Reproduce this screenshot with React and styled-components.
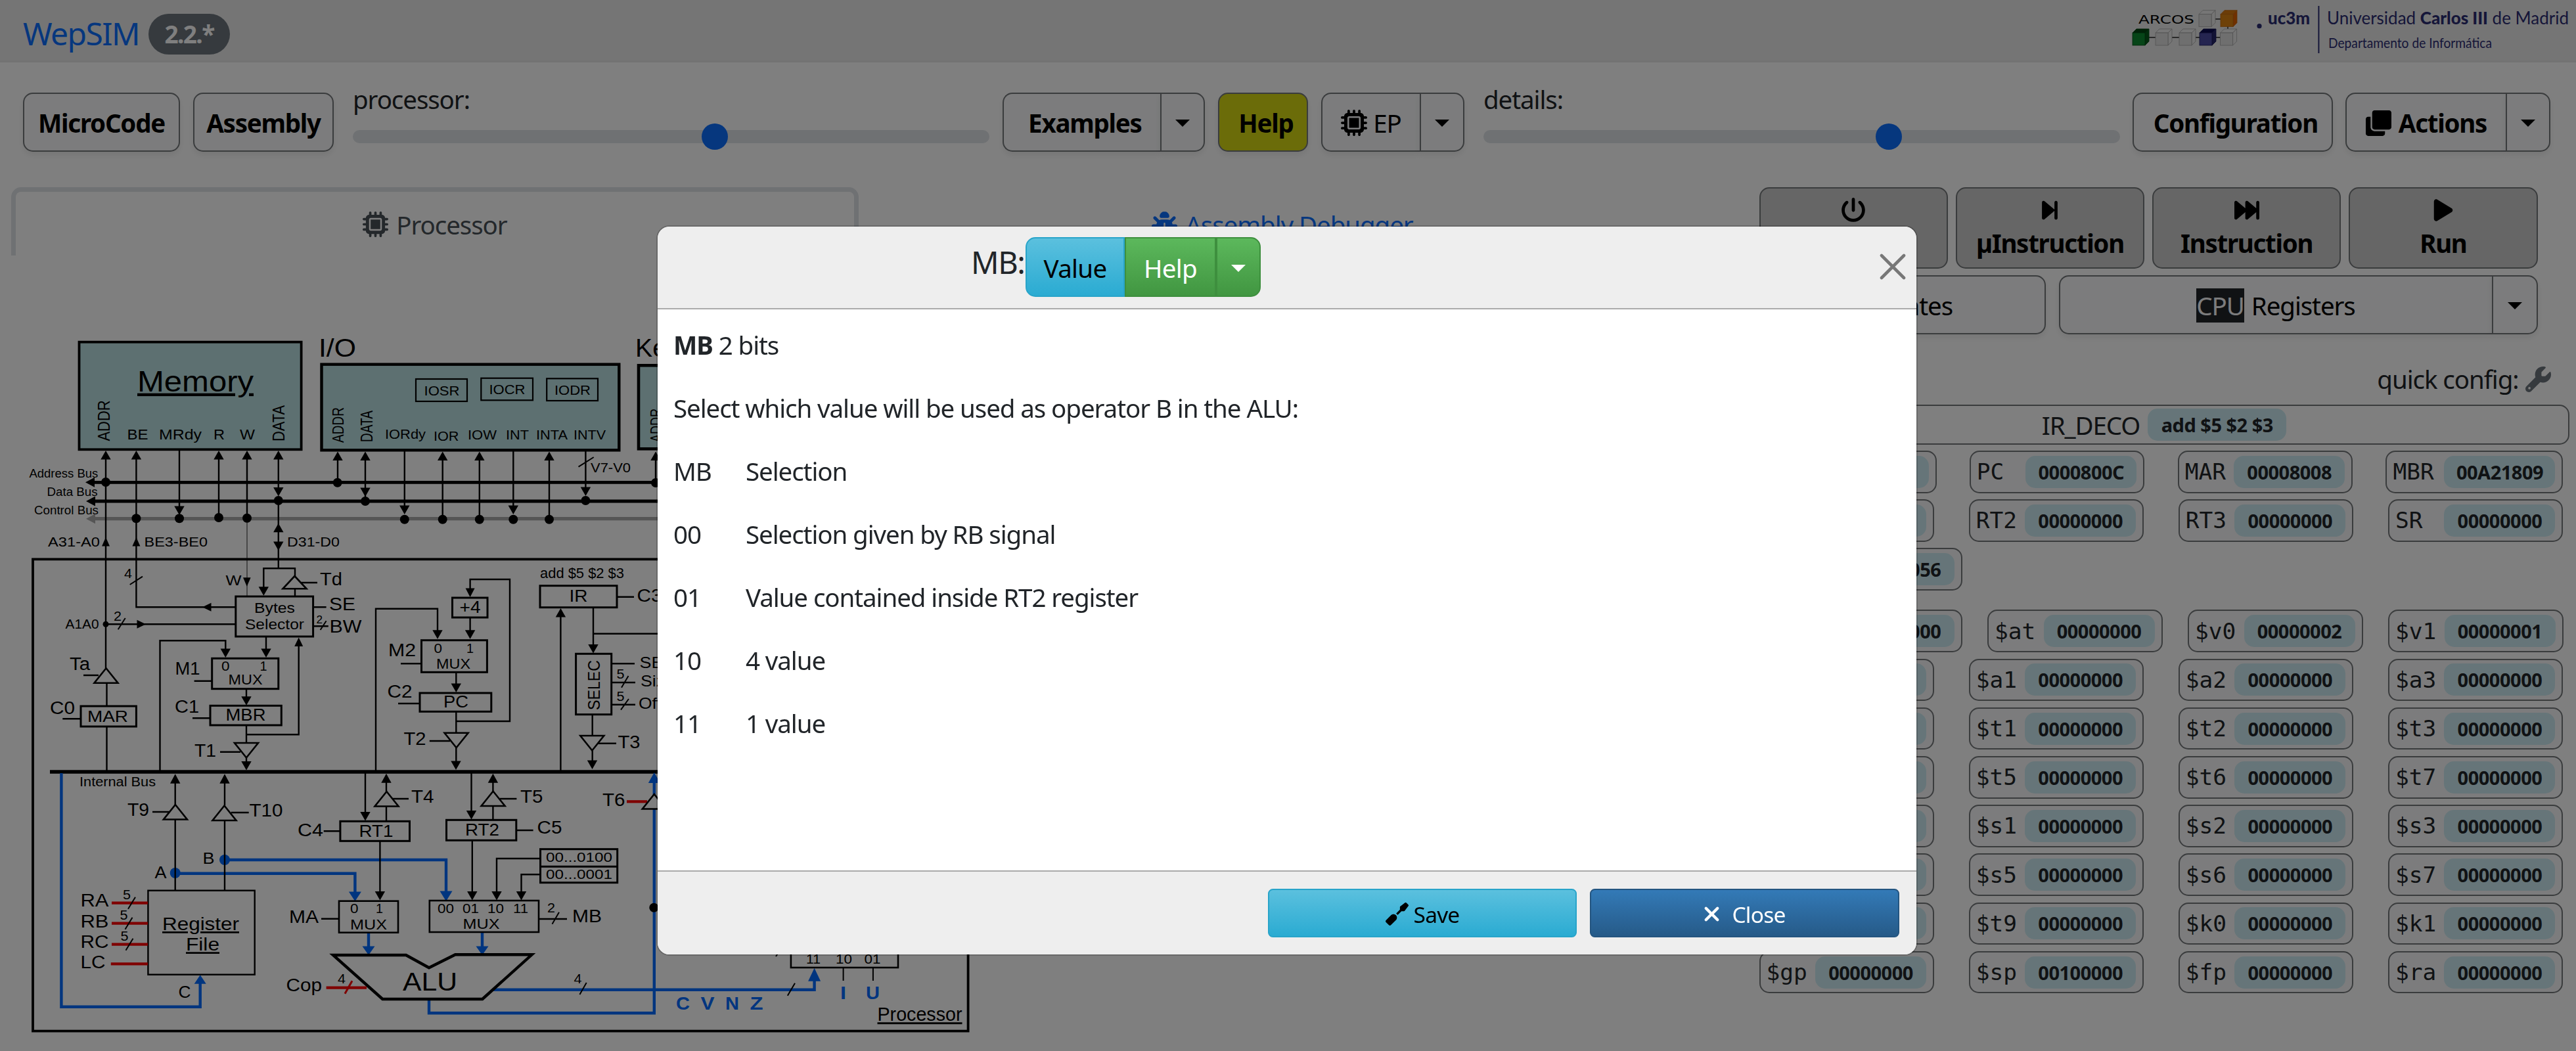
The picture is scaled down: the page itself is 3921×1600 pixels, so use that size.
import React from "react";
import styled, { createGlobalStyle, css } from "styled-components";
import {
  FaMicrochip,
  FaBug,
  FaPowerOff,
  FaForwardStep,
  FaForwardFast,
  FaPlay,
  FaWrench,
  FaScrewdriver,
  FaXmark,
} from "react-icons/fa6";
import { FaClone } from "react-icons/fa";

const Global = createGlobalStyle`
  * { box-sizing: border-box; }
  html, body { margin: 0; padding: 0; background: #fff; overflow: hidden; }
  body {
    font-family: "Noto Sans", "Open Sans", sans-serif;
    font-size: 38.5px;
    line-height: 60px;
    letter-spacing: -1.08px;
    color: #212529;
    width: 3921px;
    height: 1600px;
  }
  svg { display: block; flex: none; }
`;

const Page = styled.div`
  display: flex;
  flex-direction: column;
  width: 3921px;
  height: 1600px;
`;

/* ---------- header ---------- */

const Header = styled.header`
  display: flex;
  justify-content: space-between;
  height: 95px;
  padding-left: 35px;
  background: #ebebeb;
  border-bottom: 3px solid #e6e6e6;
`;

const Brand = styled.div`
  display: flex;
  align-items: flex-start;
  padding-top: 21px;
`;

const BrandName = styled.a`
  width: 191px;
  color: #0d6efd;
  font-size: 48px;
  line-height: 60px;
  letter-spacing: -1.6px;
`;

const Version = styled.span`
  width: 124px;
  height: 62px;
  padding-top: 1px;
  border-radius: 31px;
  background: #6c757d;
  color: #fff;
  font-size: 37px;
  font-weight: 700;
  line-height: 60px;
  letter-spacing: -1.6px;
  text-align: center;
`;

/* ---------- buttons ---------- */

const Toolbar = styled.div`
  display: flex;
  height: 190px;
  padding: 26px 0 0 35px;
`;

const Button = styled.button`
  display: flex;
  align-items: center;
  justify-content: center;
  gap: ${(p) => p.$gap ?? 11}px;
  width: ${(p) => p.$w}px;
  height: 90px;
  padding: 2px 0 0;
  margin: ${(p) => (p.$bar ? "20px 0 0" : "0")};
  border: 2px solid #75787b;
  border-radius: 15px;
  background: ${(p) => p.$bg ?? "#f8f9fa"};
  box-shadow: 0 5px 10px rgba(0, 0, 0, 0.075);
  color: #000;
  font: inherit;
  font-weight: ${(p) => (p.$bold ? 700 : 400)};
  letter-spacing: ${(p) => (p.$bold ? "-1.25px" : "inherit")};
`;

const Split = styled.div`
  display: flex;
  width: ${(p) => p.$w}px;
  margin: ${(p) => (p.$bar ? "20px 0 0" : "0")};
  & > ${Button} { margin-top: 0; }
  & > ${Button}:first-child {
    flex: 1;
    border-top-right-radius: 0;
    border-bottom-right-radius: 0;
    border-right: 0;
  }
  & > ${Button}:last-child {
    border-top-left-radius: 0;
    border-bottom-left-radius: 0;
  }
`;

const Caret = styled.i`
  width: 0;
  height: 0;
  border: 11px solid transparent;
  border-top-color: ${(p) => p.$color ?? "#000"};
  border-bottom: 0;
`;

const Gap = styled.div`
  flex: none;
  width: ${(p) => p.$w}px;
`;

/* ---------- sliders ---------- */

const SliderBox = styled.label`
  display: flex;
  flex-direction: column;
  gap: 7px;
  width: 969px;
`;

const Range = styled.input`
  appearance: none;
  width: 100%;
  height: 40px;
  margin: 0;
  background: transparent;
  &::-webkit-slider-runnable-track {
    height: 20px;
    border-radius: 10px;
    background: #dee2e6;
  }
  &::-webkit-slider-thumb {
    appearance: none;
    width: 40px;
    height: 40px;
    margin-top: -10px;
    border-radius: 50%;
    background: #0d6efd;
  }
`;

/* ---------- main columns ---------- */

const Main = styled.main`
  display: flex;
  flex: 1;
  min-height: 0;
`;

const LeftColumn = styled.section`
  display: flex;
  flex-direction: column;
  width: 2677.5px;
`;

const Tabs = styled.nav`
  display: flex;
  height: 104px;
  padding-left: 17px;
`;

const Tab = styled.div`
  display: flex;
  align-items: flex-start;
  justify-content: center;
  gap: 12px;
  width: 1290px;
  padding-top: 20px;
  border: 7px solid transparent;
  border-bottom: 0;
  border-radius: 15px 15px 0 0;
  color: #0d6efd;
  & > svg { margin-top: 10px; }
  ${(p) =>
    p.$active &&
    css`
      border-color: #dee2e6;
      color: #495057;
    `}
`;

const Circuit = styled.svg`
  margin-top: 111px;
  font-family: "Liberation Sans", Arial, sans-serif;
  letter-spacing: 0;
`;

const RightColumn = styled.section`
  display: flex;
  flex-direction: column;
  width: 1233px;
`;

const ButtonRow = styled.div`
  display: flex;
  gap: ${(p) => p.$gap}px;
  width: 1185px;
  margin-bottom: 10px;
`;

const RunButton = styled.button`
  display: flex;
  flex: 1;
  flex-direction: column;
  align-items: center;
  height: 124px;
  padding: 14px 0 0;
  border: 2px solid #75787b;
  border-radius: 15px;
  background: #ccc;
  color: #000;
  font: inherit;
  font-weight: 700;
  letter-spacing: -1.3px;
  & > span { margin-top: 1px; }
`;

const CpuMark = styled.span`
  height: 52px;
  line-height: 52px;
  background: #212529;
  color: #f8f9fa;
`;

const QuickConfig = styled.div`
  display: flex;
  align-items: center;
  justify-content: flex-end;
  gap: 10px;
  height: 60px;
  margin-top: 28px;
  padding-right: 28px;
  & > svg { color: #6c757d; }
`;

/* ---------- registers ---------- */

const Decoded = styled.div`
  display: flex;
  align-items: center;
  justify-content: center;
  gap: 12px;
  height: 61px;
  margin: 9px 0 9px;
  border: 2px solid #75787b;
  border-radius: 15px;
`;

const Badge = styled.span`
  width: ${(p) => p.$w ?? 169}px;
  height: 49px;
  padding-top: 1px;
  border-radius: 15px;
  background: #cdebf2;
  font-size: 29px;
  font-weight: 700;
  line-height: 48px;
  letter-spacing: -0.5px;
  text-align: center;
`;

const RegisterRow = styled.div`
  display: flex;
  justify-content: space-between;
  width: 1224px;
  margin-bottom: ${(p) => p.$after ?? 9.7}px;
`;

const Register = styled.div`
  display: flex;
  align-items: center;
  justify-content: space-between;
  width: ${(p) => p.$w}px;
  height: 64.5px;
  padding: 0 10px 0 9px;
  border: 2px solid #75787b;
  border-radius: 15px;
  background: #f8f9fa;
  font-family: "DejaVu Sans Mono", monospace;
  font-size: 34.5px;
  letter-spacing: 0;
  & > ${Badge} { font-family: "Noto Sans", sans-serif; }
`;

/* ---------- dialog ---------- */

const Backdrop = styled.div`
  position: fixed;
  inset: 0;
  padding: 343px 0 0 999px;
  background: rgba(0, 0, 0, 0.5);
`;

const Dialog = styled.div`
  display: flex;
  flex-direction: column;
  width: 1920px;
  height: 1112px;
  overflow: hidden;
  border: 2px solid rgba(0, 0, 0, 0.175);
  border-radius: 20px;
  background: #fff;
  background-clip: padding-box;
`;

const DialogHeader = styled.div`
  display: flex;
  flex: none;
  height: 126px;
  padding: 16px 16px 0 477px;
  border-bottom: 2px solid #aaa;
  background: #eee;
`;

const DialogTitle = styled.h5`
  width: 83px;
  margin: 8px 0 0;
  font-size: 47px;
  font-weight: 400;
  line-height: 60px;
  letter-spacing: -1.5px;
  white-space: nowrap;
`;

const tones = {
  info: ["#5bc0de", "#2aabd2", "#28a4c9", "#000"],
  success: ["#5cb85c", "#419641", "#3e8f3e", "#fff"],
  primary: ["#337ab7", "#265a88", "#245580", "#fff"],
};

const ToneButton = styled.button`
  display: flex;
  align-items: center;
  justify-content: center;
  gap: ${(p) => p.$gap ?? 0}px;
  width: ${(p) => p.$w}px;
  height: ${(p) => p.$h ?? 91}px;
  padding: 3px ${(p) => p.$pr ?? 0}px 0 0;
  border: 2px solid ${(p) => tones[p.$tone][2]};
  border-radius: ${(p) => p.$r ?? "7.5px"};
  background: linear-gradient(${(p) => tones[p.$tone][0]}, ${(p) => tones[p.$tone][1]});
  color: ${(p) => tones[p.$tone][3]};
  font: inherit;
  font-size: ${(p) => p.$fs ?? 38.5}px;
  letter-spacing: ${(p) => p.$ls ?? -0.7}px;
`;

const CloseIcon = styled.svg`
  margin: 25px 0 0 auto;
`;

const DialogBody = styled.div`
  flex: 1;
  padding: 5.5px 24px 0;
`;

const Line = styled.p`
  margin: 0 0 18px;
  padding-top: 18px;
`;

const Choice = styled(Line)`
  display: grid;
  grid-template-columns: 110px 1fr;
`;

const DialogFooter = styled.div`
  display: flex;
  flex: none;
  justify-content: flex-end;
  gap: 20px;
  height: 128px;
  padding: 26px 26px 0 0;
  border-top: 2px solid #aaa;
  background: #eee;
`;

/* ---------- circuit drawing helpers ---------- */

const BLUE = "#006aff";
const RED = "#ff0000";

const T = ({ x, y, w, s = 27, v, rot, ...rest }) => (
  <text
    x={x}
    y={y}
    fontSize={s}
    textLength={w}
    lengthAdjust="spacingAndGlyphs"
    transform={rot ? `rotate(-90 ${x} ${y})` : undefined}
    {...rest}
  >
    {v}
  </text>
);

const Wire = ({ d, c = "#000", w = 2.4 }) => <path d={d} fill="none" stroke={c} strokeWidth={w} />;

const heads = {
  up: (x, y, a, l) => `${x},${y} ${x - a},${y + l} ${x + a},${y + l}`,
  down: (x, y, a, l) => `${x},${y} ${x - a},${y - l} ${x + a},${y - l}`,
  left: (x, y, a, l) => `${x},${y} ${x + l},${y - a} ${x + l},${y + a}`,
  right: (x, y, a, l) => `${x},${y} ${x - l},${y - a} ${x - l},${y + a}`,
};

const Head = ({ x, y, to = "down", a = 7.7, l = 13.5, c = "#000" }) => (
  <polygon points={heads[to](x, y, a, l)} fill={c} />
);

const Dot = ({ x, y, r = 7, c = "#000" }) => <circle cx={x} cy={y} r={r} fill={c} />;

const Box = ({ x, y, x2, y2, w = 3, fill = "none" }) => (
  <rect x={x} y={y} width={x2 - x} height={y2 - y} fill={fill} stroke="#000" strokeWidth={w} />
);

const Gate = ({ x, y, up, h = 22.5 }) => (
  <polygon
    points={
      up
        ? `${x},${y} ${x - 18},${y + h} ${x + 18},${y + h}`
        : `${x - 18},${y} ${x + 18},${y} ${x},${y + h}`
    }
    fill="#fff"
    stroke="#000"
    strokeWidth="2.6"
  />
);

const ioDown = [[615.8, 783], [781.3, 783]];
const ioUp = [673.7, 729.8, 836];

const Peripherals = () => (
  <g>
    <Box x={120.5} y={520.7} x2={458.6} y2={684.3} w={3.8} fill="#bbe0e3" />
    <Box x={489.5} y={554.7} x2={942.3} y2={685.3} w={4.4} fill="#bbe0e3" />
    <Box x={972} y={556.3} x2={1180} y2={683.3} w={4.6} fill="#bbe0e3" />
    <T x={209} y={595.7} s={44} w={177} v="Memory" textDecoration="underline" />
    <T x={485} y={543.3} s={39} w={57} v="I/O" />
    <T x={967} y={543.3} s={39} w={168} v="Keyboard" />
    <Box x={633} y={577} x2={711} y2={611} w={2.2} />
    <Box x={732.3} y={575.7} x2={811} y2={609.3} w={2.2} />
    <Box x={832.2} y={576.3} x2={910} y2={610} w={2.2} />
    <T x={645.5} y={601.7} s={21} w={54} v="IOSR" />
    <T x={744.5} y={600} s={21} w={55} v="IOCR" />
    <T x={844} y={600.7} s={21} w={55} v="IODR" />
    <T rot x={167} y={671.5} s={26} w={62} v="ADDR" />
    <T x={193.5} y={668.7} s={21.5} w={32} v="BE" />
    <T x={242} y={668.7} s={21.5} w={65} v="MRdy" />
    <T x={325} y={668.7} s={21.5} w={17} v="R" />
    <T x={365} y={668.7} s={21.5} w={23} v="W" />
    <T rot x={432.5} y={672} s={26} w={55} v="DATA" />
    <T rot x={523} y={674} s={24.5} w={54} v="ADDR" />
    <T rot x={567} y={673} s={25} w={48} v="DATA" />
    <T x={586} y={668} s={21} w={62} v="IORdy" />
    <T x={660} y={670.7} s={21} w={38.5} v="IOR" />
    <T x={712} y={668.7} s={21} w={44} v="IOW" />
    <T x={770} y={668.7} s={21} w={35} v="INT" />
    <T x={816} y={668.7} s={21} w={48} v="INTA" />
    <T x={873} y={668.7} s={21} w={49} v="INTV" />
    <T rot x={1007} y={673} s={24.5} w={51} v="ADDR" />
    <T x={44.4} y={726.7} s={18} w={105} v="Address Bus" />
    <T x={71.5} y={754.7} s={18} w={77} v="Data Bus" />
    <T x={52} y={782.7} s={18} w={98} v="Control Bus" />
    <Wire d="M140 734.3H1400" w={4.8} />
    <Head to="left" x={130} y={734.3} a={7.5} l={14} />
    <Wire d="M140 763H1400" w={4.8} />
    <Head to="left" x={131} y={763} a={7.5} l={14} />
    <Wire d="M140 789.7H1400" c="#aaa" w={5.2} />
    <Head to="left" x={131} y={789.7} a={7.5} l={14} c="#aaa" />
    {[161, 207.4, 333, 376].map((x) => (
      <Head key={x} to="up" x={x} y={686} />
    ))}
    <Wire d="M161 690V1017M207.4 690V924.3H358.8M273 686V780M333 690V788M376 690V788M423.8 690V752M423.8 762V865" />
    <Wire d="M376 788V907" c="#555" w={1.3} />
    <Head x={273} y={784} />
    <Head to="up" x={423.8} y={686} />
    <Head x={423.8} y={755.5} />
    <Dot x={161} y={734} />
    <Dot x={207.4} y={789.3} />
    <Dot x={273} y={789.3} />
    <Dot x={333} y={788} />
    <Dot x={376} y={788.7} />
    <Dot x={423.8} y={762} />
    <Wire d="M514 695V734M556 695V760M615.8 686V780M673.7 695V790M729.8 695V790M781.3 686V780M836 695V790M891.4 686V750M998 695V734" />
    {ioUp.map((x) => (
      <g key={x}>
        <Head to="up" x={x} y={687.5} />
        <Dot x={x} y={790.7} />
      </g>
    ))}
    {ioDown.map(([x, y]) => (
      <g key={x}>
        <Head x={x} y={y} />
        <Dot x={x} y={790.7} />
      </g>
    ))}
    <Head to="up" x={514} y={687.5} />
    <Head to="up" x={556} y={687.5} />
    <Head to="up" x={998} y={687.5} />
    <Head x={556} y={756} />
    <Head x={891.4} y={755} />
    <Dot x={513.7} y={734.7} />
    <Dot x={556} y={763} />
    <Dot x={891.4} y={762} />
    <Dot x={998} y={735} />
    <Wire d="M880.5 710.7L903.7 696" w={2} />
    <T x={899} y={718.7} s={20.5} w={61} v="V7-V0" />
    <T x={73} y={832} s={20.5} w={79} v="A31-A0" />
    <T x={219.5} y={832} s={20.5} w={96.5} v="BE3-BE0" />
    <T x={437} y={832} s={20.5} w={80} v="D31-D0" />
    <Head to="up" x={161} y={818} a={6} />
    <Head to="up" x={207.4} y={818} a={6} />
    <Head to="up" x={423.8} y={796.7} />
    <Head x={423.8} y={838} />
  </g>
);

const DataPath = () => (
  <g>
    <path d="M50 1569.7V851.3H1473.6V1569.7Z" fill="none" stroke="#000" strokeWidth="3.8" />
    <T x={189} y={880} s={20.5} w={12} v="4" />
    <Wire d="M197.7 890L217 877.7" w={2} />
    <Head to="left" x={308} y={924.3} a={6.5} />
    <T x={99.5} y={956.7} s={20.5} w={51} v="A1A0" />
    <Dot x={161} y={950.3} r={4.5} />
    <Wire d="M161 950.3H358.8" />
    <Head to="right" x={222} y={950.3} a={6.5} />
    <T x={173} y={945} s={20.5} w={12} v="2" />
    <Wire d="M179.7 958.3L190.7 941" w={2} />
    <Gate up x={161.5} y={1017.3} />
    <T x={106} y={1020} s={27} w={31} v="Ta" />
    <Wire d="M127 1028H150M162.5 1041V1075M162.5 1106V1175M95.3 1094.3H123" />
    <Box x={123} y={1075} x2={207.4} y2={1106} />
    <T x={133} y={1098.7} s={24.5} w={62} v="MAR" />
    <T x={76} y={1086.7} s={27} w={38} v="C0" />
    <Wire d="M76 1175H1400" w={5.4} />
    <T x={121} y={1196.7} s={20} w={116} v="Internal Bus" />

    <T x={343.5} y={891} s={21.5} w={24} v="W" />
    <Head x={375.8} y={892.7} a={5.8} />
    <Wire d="M401.3 900V865.3H449V877M449 897V907" />
    <Head x={401.3} y={906.7} />
    <Gate up x={448.5} y={877} h={19.3} />
    <Wire d="M458.6 887H483M476.6 924.3H496.6M476.6 953.3H499.8" />
    <T x={487} y={891} s={27.5} w={34} v="Td" />
    <Box x={358.8} y={908} x2={476.6} y2={969} />
    <T x={387} y={932.7} s={21.5} w={62} v="Bytes" />
    <T x={373} y={958} s={21.5} w={90} v="Selector" />
    <T x={501} y={929.3} s={27} w={40} v="SE" />
    <T x={481.5} y={949} s={17} w={9.5} v="2" />
    <Wire d="M487.6 959L496.6 945.3" w={2} />
    <T x={501.5} y={963.3} s={27} w={49} v="BW" />

    <Wire d="M405 969V995M454.7 980V1118.3H375M243.5 1175V975.3H343.3V995M295.6 1036.7H322.7M375 1048.7V1068M293 1093.3H320M375 1104V1131M335 1144.7H366M375 1153V1165" />
    <Head x={405} y={1001} />
    <Head x={343.3} y={1001} />
    <Head to="up" x={454.7} y={970.5} a={6.5} />
    <Box x={322.7} y={1002.3} x2={423.8} y2={1048.7} />
    <T x={337} y={1021} s={20.5} w={12.5} v="0" />
    <T x={395.5} y={1021} s={20.5} w={11} v="1" />
    <T x={347.5} y={1041.7} s={21.5} w={52} v="MUX" />
    <T x={266.5} y={1026.7} s={28} w={38} v="M1" />
    <Head x={375} y={1073.7} />
    <Box x={320} y={1074.3} x2={428.3} y2={1104} />
    <T x={343.5} y={1097} s={25} w={61} v="MBR" />
    <T x={266} y={1085.3} s={27} w={37} v="C1" />
    <Gate x={375} y={1131} />
    <Head x={375} y={1172.5} />
    <T x={296} y={1151.7} s={27} w={33} v="T1" />

    <Wire d="M572 1175V926.7H666V966M715.6 940V966M715.6 902V882H776V1098H694.3M610 1010.3H641.5M694.3 1023.3V1048M606 1071H639M694.3 1083.3V1116M653.8 1128H685M694.3 1137V1165" />
    <Head x={666} y={972.7} />
    <Head x={715.6} y={972.7} />
    <Head x={715.6} y={909} a={7} />
    <Box x={688.5} y={910} x2={742} y2={940} />
    <T x={699.5} y={932.7} s={25} w={32} v="+4" />
    <Box x={641.5} y={974.7} x2={741.4} y2={1023.3} />
    <T x={660.5} y={994.3} s={20.5} w={12.5} v="0" />
    <T x={710} y={994.3} s={20.5} w={11} v="1" />
    <T x={664} y={1017.7} s={21.5} w={52} v="MUX" />
    <T x={591} y={999} s={27} w={42} v="M2" />
    <Head x={694.3} y={1054} />
    <Box x={639} y={1055} x2={747.8} y2={1083.3} />
    <T x={675} y={1077} s={25} w={38} v="PC" />
    <T x={589.5} y={1062} s={27} w={38} v="C2" />
    <Gate x={694.6} y={1115.7} />
    <Head x={694} y={1172} />
    <T x={614.5} y={1134} s={27} w={34} v="T2" />

    <T x={822} y={880} s={21.5} w={128} v="add $5 $2 $3" />
    <Box x={822} y={891.7} x2={939} y2={924.7} />
    <T x={866.5} y={915.7} s={25.5} w={28} v="IR" />
    <T x={969.5} y={916} s={27} w={38} v="C3" />
    <Wire d="M939 908.7H965M853.4 1175V935M903 924.7V990M903 964.7H1200M930.7 1010.3H966M930.7 1039H967M930.7 1072.7H967M901.7 1087.7V1120M910 1131.7H938M901.7 1142V1165" />
    <Head to="up" x={853.4} y={926} />
    <Head x={903} y={994.5} />
    <Box x={876.6} y={995.3} x2={930.7} y2={1087.7} />
    <T rot x={912.7} y={1081} s={25.5} w={76} v="SELEC" />
    <Wire d="M946 1046.7L956.5 1029M945 1080.7L957 1064" w={2} />
    <T x={938.5} y={1033.3} s={19.5} w={12} v="5" />
    <T x={938.5} y={1067} s={19.5} w={12} v="5" />
    <T x={973.5} y={1016.7} s={24} w={36} v="SE" />
    <T x={975} y={1045} s={24} w={52} v="Size" />
    <T x={972} y={1079} s={24} w={70} v="Offset" />
    <Gate x={901.3} y={1120} />
    <Head x={901.5} y={1171} />
    <T x={940.5} y={1139} s={27} w={34} v="T3" />
  </g>
);

const field = (label, y, numX, lineY) => ({ label, y, numX, lineY });
const regInputs = [
  field("RA", 1380.3, 187, 1374.7),
  field("RB", 1411.7, 182.5, 1405.7),
  field("RC", 1443, 183.5, 1437.7),
];

const Execution = () => (
  <g>
    <Wire c={BLUE} w={4.4} d="M93.4 1177V1532.7H304.7V1494M266.7 1329.7H540.4V1362M342 1309H679V1362M561 1420V1445M734 1420V1445M751 1506.7H1239.6V1484M653 1521V1542.3H995.8V1231M995.8 1212V1188" />
    <Head to="up" x={304.7} y={1484.3} c={BLUE} a={9} />
    <Head x={540.4} y={1372} c={BLUE} a={9.5} l={14.5} />
    <Head x={679} y={1372} c={BLUE} a={9.5} l={15.5} />
    <Head x={561} y={1454} c={BLUE} a={9.5} />
    <Head x={734} y={1454} c={BLUE} a={9.5} />
    <Head to="up" x={995.8} y={1176} c={BLUE} a={9} l={16} />
    <Head to="up" x={1239.6} y={1473.7} c={BLUE} a={9.5} l={20} />
    <Dot x={266.7} y={1329} r={8} c={BLUE} />
    <Dot x={342} y={1309} r={8} c={BLUE} />
    <Wire d="M266.7 1190V1225M266.7 1248V1355.7M342 1190V1226M342 1250V1355.7M232 1236H257.6M351.7 1237H378.7" />
    <Head to="up" x={266.7} y={1178.3} l={14.5} />
    <Head to="up" x={342} y={1178.3} l={14.5} />
    <Gate up x={266.9} y={1225} />
    <Gate up x={341.5} y={1226.5} />
    <T x={194} y={1242} s={27} w={33} v="T9" />
    <T x={379.5} y={1243.3} s={27} w={51} v="T10" />
    <T x={235.5} y={1336.7} s={25} w={18} v="A" />
    <T x={308.5} y={1315.3} s={24} w={18} v="B" />
    <T x={271.5} y={1519} s={25} w={19} v="C" />
    <Box x={225.4} y={1355.7} x2={387.7} y2={1483.7} w={2.4} />
    <T x={247} y={1416} s={27} w={117} v="Register" textDecoration="underline" />
    <T x={283} y={1447.3} s={27} w={51} v="File" textDecoration="underline" />
    {regInputs.map((f) => (
      <g key={f.label}>
        <T x={122.5} y={f.y} s={27} w={43} v={f.label} />
        <Wire c={RED} w={4.2} d={`M170 ${f.lineY}H225`} />
        <T x={f.numX} y={f.lineY - 5.5} s={20} w={12} v="5" />
        <Wire w={2} d={`M${f.numX + 8} ${f.lineY + 9}L${f.numX + 19} ${f.lineY - 9}`} />
      </g>
    ))}
    <T x={122.5} y={1474} s={27} w={38} v="LC" />
    <Wire c={RED} w={4.2} d="M168.8 1467.3H225" />

    <Wire d="M556 1177V1240M588 1190V1205M588 1228V1250M598 1216H622M492.7 1265.3H517.9M578.4 1280V1360M717.5 1177V1240M750.4 1190V1205M750.4 1228V1248M760.7 1216H786.4M785.8 1264H811.6M718.8 1279V1360M822.5 1307H756V1360M822.5 1331.3H793.5V1360M489 1398.7H516M820 1399H863" />
    <Head x={556} y={1249.5} />
    <Head x={717.5} y={1247.5} />
    <Head to="up" x={588} y={1177.7} l={14} />
    <Head to="up" x={750.4} y={1177.7} l={14} />
    <Gate up x={588.5} y={1205} />
    <Gate up x={750.6} y={1204.5} />
    <T x={626} y={1222.3} s={27} w={34.5} v="T4" />
    <T x={792} y={1222.3} s={27} w={34.5} v="T5" />
    <Box x={517.9} y={1250.3} x2={623.5} y2={1280.3} />
    <Box x={679.5} y={1248.3} x2={785.8} y2={1279.3} />
    <T x={546.5} y={1274} s={25} w={52} v="RT1" />
    <T x={708} y={1271.7} s={25} w={52} v="RT2" />
    <T x={453} y={1272.7} s={27} w={39} v="C4" />
    <T x={817.5} y={1269} s={27} w={38} v="C5" />
    <Box x={822.5} y={1292.7} x2={939.7} y2={1343.7} />
    <Wire d="M822.5 1319.3H939.7" w={3} />
    <T x={831} y={1312} s={20.5} w={101} v="00...0100" />
    <T x={831} y={1338} s={20.5} w={101} v="00...0001" />
    {[578.4, 718.8, 756, 793.5].map((x) => (
      <Head key={x} x={x} y={1370.5} />
    ))}
    <Box x={516} y={1371.7} x2={606} y2={1419.7} w={2.6} />
    <Box x={653.8} y={1371} x2={820} y2={1419} w={2.6} />
    <T x={533} y={1390} s={20.5} w={12.5} v="0" />
    <T x={572} y={1390} s={20.5} w={11} v="1" />
    <T x={533} y={1414.7} s={22} w={56} v="MUX" />
    <T x={666} y={1390} s={20.5} w={25} v="00" />
    <T x={704} y={1390} s={20.5} w={25} v="01" />
    <T x={742} y={1390} s={20.5} w={25} v="10" />
    <T x={781} y={1390} s={20.5} w={23} v="11" />
    <T x={704.5} y={1414} s={22} w={56} v="MUX" />
    <T x={440} y={1405} s={27} w={45} v="MA" />
    <T x={833} y={1389} s={20} w={12} v="2" />
    <Wire d="M840.5 1406.7L851 1388.7" w={2} />
    <T x={871} y={1404} s={27} w={45} v="MB" />

    <polygon
      points="507,1454 618,1454 653,1473.3 693,1453.3 809.6,1453.3 734.3,1521 582.3,1521"
      fill="none"
      stroke="#000"
      strokeWidth="4.4"
    />
    <T x={613} y={1508} s={38} w={83} v="ALU" />
    <T x={435.5} y={1509} s={27} w={54.5} v="Cop" />
    <Wire c={RED} w={4.2} d="M496.6 1503.7H558" />
    <Wire c={RED} w={3} d="M525 1512.7L536 1493.3" />
    <T x={514} y={1496.7} s={19.5} w={12} v="4" />
    <T x={873.5} y={1496.7} s={19.5} w={12} v="4" />
    <Wire d="M882.4 1514L892.7 1496M1198.8 1515.7L1210 1496.7M1181 1456L1185 1450" w={2} />

    <T x={917} y={1227.3} s={27} w={34.5} v="T6" />
    <Wire c={RED} w={4.2} d="M954 1220.3H985" />
    <Gate up x={995.8} y={1209} />
    <Dot x={995.3} y={1381.7} />

    <Box x={1203.9} y={1420} x2={1367} y2={1473} w={2.6} />
    <T x={1227} y={1466.7} s={20.5} w={22} v="11" />
    <T x={1272} y={1466.7} s={20.5} w={25} v="10" />
    <T x={1315.5} y={1466.7} s={20.5} w={25} v="01" />
    <Wire d="M1283.6 1473V1493M1328.9 1473V1493" w={2} />
    <g fill={BLUE} fontWeight="700">
      <T x={1279} y={1521.3} s={27} w={9} v="I" />
      <T x={1318} y={1521.3} s={27} w={21} v="U" />
      <T x={1029} y={1536.7} s={27} w={21} v="C" />
      <T x={1066.5} y={1536.7} s={27} w={21} v="V" />
      <T x={1104} y={1536.7} s={27} w={21} v="N" />
      <T x={1141.5} y={1536.7} s={27} w={20} v="Z" />
    </g>
    <T x={1335.5} y={1554.3} s={29} w={129} v="Processor" textDecoration="underline" />
  </g>
);

/* ---------- institution logos ---------- */

const Cube = ({ x, y, front = "#dedede", side = "#e9e9e9", top = "#ececec", line = "#a6a6a6" }) => (
  <g stroke={line} strokeWidth="0.8">
    <polygon points={`${x},${y} ${x + 6},${y - 6} ${x + 25},${y - 6} ${x + 19},${y}`} fill={top} />
    <polygon
      points={`${x + 19},${y} ${x + 25},${y - 6} ${x + 25},${y + 13} ${x + 19},${y + 19}`}
      fill={side}
    />
    <rect x={x} y={y} width="19" height="19" fill={front} />
  </g>
);

const Logos = () => (
  <svg width="681" height="92" viewBox="3240 0 681 92">
    <path
      d="M3368 29H3382M3391 40V48M3268 57H3281M3303 57H3318M3339 57H3349M3370 57H3381"
      stroke="#555"
      strokeWidth="2"
    />
    <Cube x={3347} y={21.7} />
    <Cube x={3380} y={21.7} front="#dd8210" side="#e06000" top="#d97a10" line="#c06a10" />
    <Cube x={3246} y={50} front="#0c8a30" side="#045a18" top="#024510" line="#034a14" />
    <Cube x={3281} y={50} />
    <Cube x={3317} y={50} />
    <Cube x={3348} y={50} front="#4a4aa0" side="#24246a" top="#0a0a50" line="#1a1a58" />
    <Cube x={3379.6} y={50} />
    <T x={3255} y={35.7} s={17.5} w={85} v="ARCOS" fontFamily="DejaVu Sans" letterSpacing="0" />
    <g fill="#2a2c72" fontFamily="Lato, sans-serif" letterSpacing="0">
      <circle cx="3439" cy="39.7" r="3.6" />
      <T x={3452} y={37} s={27} w={64} v="uc3m" fontWeight="900" />
      <rect x="3528.4" y="9" width="2" height="72" />
      <text x="3542" y="37.3" fontSize="27" textLength="368" lengthAdjust="spacingAndGlyphs">
        Universidad <tspan fontWeight="900">Carlos III</tspan> de Madrid
      </text>
      <T x={3544} y={73} s={22} w={249} v="Departamento de Informática" />
    </g>
  </svg>
);

/* ---------- data ---------- */

const Z = "00000000";
const registerRows = [
  { cells: [["IR", "00A21809", 270], ["PC", "0000800C"], ["MAR", "00008008"], ["MBR", "00A21809", 270]] },
  { cells: [["RT1", Z], ["RT2", Z], ["RT3", Z], ["SR", Z]] },
  { cells: [["CYCLE", "00000056", 309]], after: 29.6 },
  { cells: [["$zero", Z, 309], ["$at", Z], ["$v0", "00000002"], ["$v1", "00000001"]] },
  { cells: [["$a0", Z], ["$a1", Z], ["$a2", Z], ["$a3", Z]] },
  { cells: [["$t0", Z], ["$t1", Z], ["$t2", Z], ["$t3", Z]] },
  { cells: [["$t4", Z], ["$t5", Z], ["$t6", Z], ["$t7", Z]] },
  { cells: [["$s0", Z], ["$s1", Z], ["$s2", Z], ["$s3", Z]] },
  { cells: [["$s4", Z], ["$s5", Z], ["$s6", Z], ["$s7", Z]] },
  { cells: [["$t8", Z], ["$t9", Z], ["$k0", Z], ["$k1", Z]] },
  { cells: [["$gp", Z], ["$sp", "00100000"], ["$fp", Z], ["$ra", Z]] },
];

const choices = [
  ["MB", "Selection"],
  ["00", "Selection given by RB signal"],
  ["01", "Value contained inside RT2 register"],
  ["10", "4 value"],
  ["11", "1 value"],
];

const Slider = ({ label, value }) => (
  <SliderBox>
    <span>{label}</span>
    <Range type="range" min="0" max="14" defaultValue={value} />
  </SliderBox>
);

export default function App() {
  return (
    <>
      <Global />
      <Page>
        <Header>
          <Brand>
            <BrandName>WepSIM</BrandName>
            <Version>2.2.*</Version>
          </Brand>
          <Logos />
        </Header>

        <Toolbar>
          <Button $bar $bold $w={239}>MicroCode</Button>
          <Gap $w={20} />
          <Button $bar $bold $w={214}>Assembly</Button>
          <Gap $w={29} />
          <Slider label="processor:" value={8} />
          <Gap $w={20} />
          <Split $bar $w={308}>
            <Button $bold>&nbsp;Examples</Button>
            <Button $w={68}><Caret /></Button>
          </Split>
          <Gap $w={20} />
          <Button $bar $bold $w={137} $bg="#d6d912">&nbsp;Help</Button>
          <Gap $w={20} />
          <Split $bar $w={218}>
            <Button $gap={9}><FaMicrochip size={40} />EP</Button>
            <Button $w={68}><Caret /></Button>
          </Split>
          <Gap $w={29} />
          <Slider label="details:" value={9} />
          <Gap $w={19} />
          <Button $bar $bold $w={305}>&nbsp;Configuration</Button>
          <Gap $w={19} />
          <Split $bar $w={312}>
            <Button $bold><FaClone size={39} />Actions</Button>
            <Button $w={68}><Caret /></Button>
          </Split>
        </Toolbar>

        <Main>
          <LeftColumn>
            <Tabs>
              <Tab $active><FaMicrochip size={39} />Processor</Tab>
              <Tab><FaBug size={39} />Assembly Debugger</Tab>
            </Tabs>
            <Circuit width="1480" height="1090" viewBox="0 500 1480 1090">
              <Peripherals />
              <DataPath />
              <Execution />
            </Circuit>
          </LeftColumn>

          <RightColumn>
            <ButtonRow $gap={12}>
              <RunButton><FaPowerOff size={38} /><span>Reset</span></RunButton>
              <RunButton><FaForwardStep size={38} /><span>µInstruction</span></RunButton>
              <RunButton><FaForwardFast size={38} /><span>Instruction</span></RunButton>
              <RunButton><FaPlay size={38} /><span>Run</span></RunButton>
            </ButtonRow>
            <ButtonRow $gap={20}>
              <Button $w={436}><FaMicrochip size={38} />States</Button>
              <Split $w={729}>
                <Button><CpuMark>CPU</CpuMark>Registers</Button>
                <Button $w={70}><Caret /></Button>
              </Split>
            </ButtonRow>
            <QuickConfig>quick config: <FaWrench size={39} /></QuickConfig>
            <Decoded>IR_DECO <Badge $w={211}>add $5 $2 $3</Badge></Decoded>
            {registerRows.map((row) => (
              <RegisterRow key={row.cells[0][0]} $after={row.after}>
                {row.cells.map(([name, value, w = 266.5]) => (
                  <Register key={name} $w={w}>
                    {name}
                    <Badge>{value}</Badge>
                  </Register>
                ))}
              </RegisterRow>
            ))}
          </RightColumn>
        </Main>
      </Page>

      <Backdrop>
        <Dialog>
          <DialogHeader>
            <DialogTitle>MB:</DialogTitle>
            <ToneButton $tone="info" $w={151} $r="15px 0 0 15px">Value</ToneButton>
            <ToneButton $tone="success" $w={139} $r="0">Help</ToneButton>
            <ToneButton $tone="success" $w={68} $r="0 15px 15px 0"><Caret $color="#fff" /></ToneButton>
            <CloseIcon width="40" height="40" viewBox="0 0 40 40">
              <path d="M3 3L37 37M37 3L3 37" stroke="#777" strokeWidth="4.6" strokeLinecap="round" />
            </CloseIcon>
          </DialogHeader>
          <DialogBody>
            <Line><b>MB</b> 2 bits</Line>
            <Line>Select which value will be used as operator B in the ALU:</Line>
            {choices.map(([code, text]) => (
              <Choice key={code}>
                <span>{code}</span>
                <span>{text}</span>
              </Choice>
            ))}
          </DialogBody>
          <DialogFooter>
            <ToneButton $tone="info" $w={470} $h={74} $fs={33.5} $gap={8} $ls={-0.8}>
              <FaScrewdriver size={35} />Save
            </ToneButton>
            <ToneButton $tone="primary" $w={471} $h={74} $fs={33.5} $gap={13} $pr={5} $ls={-0.8}>
              <FaXmark size={35} />Close
            </ToneButton>
          </DialogFooter>
        </Dialog>
      </Backdrop>
    </>
  );
}
